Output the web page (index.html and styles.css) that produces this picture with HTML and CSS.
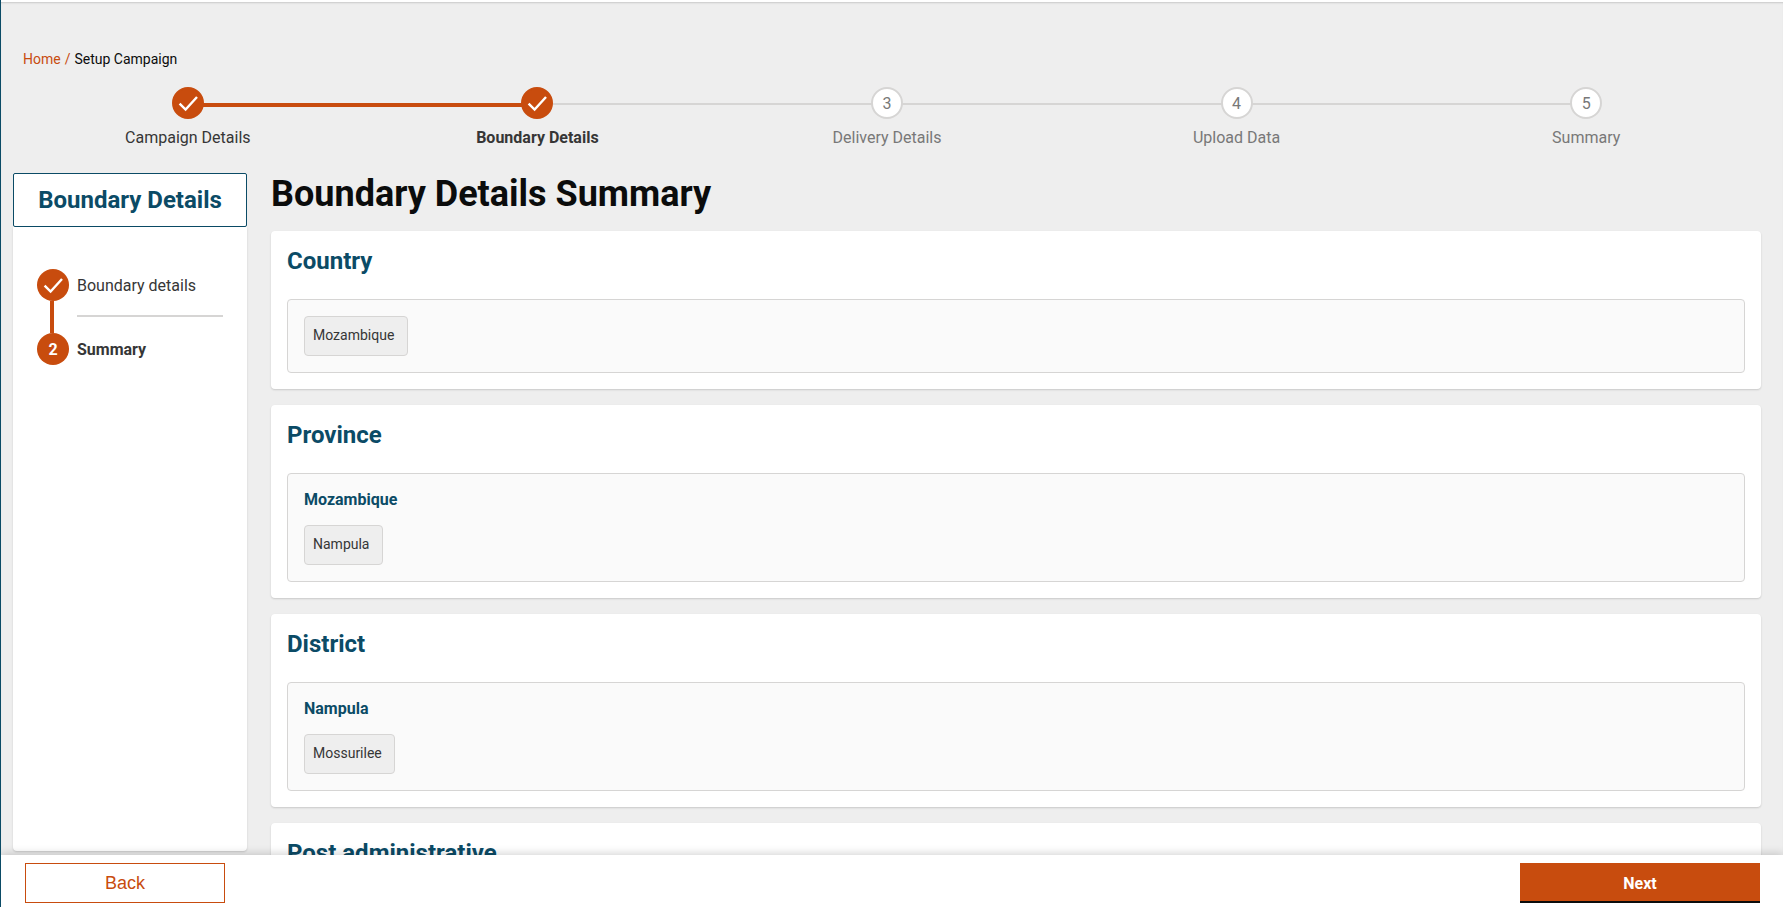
FILE: index.html
```html
<!DOCTYPE html>
<html lang="en">
<head>
<meta charset="utf-8">
<title>Setup Campaign</title>
<link rel="stylesheet" href="styles.css">
</head>
<body>
<div class="app">
  <div class="content">
    <nav class="crumbs"><a class="crumb-link">Home</a><span class="crumb-sep">/</span><span class="crumb-current">Setup Campaign</span></nav>
    <ol class="stepper">
      <li class="step done">
        <span class="step-track"><span class="bubble"><svg class="check" viewBox="0 0 20 20"><path d="M3 10.5 L8 15.5 L17.5 5"/></svg></span></span>
        <span class="step-label">Campaign Details</span>
      </li>
      <li class="step done current">
        <span class="step-track"><span class="bubble"><svg class="check" viewBox="0 0 20 20"><path d="M3 10.5 L8 15.5 L17.5 5"/></svg></span></span>
        <span class="step-label">Boundary Details</span>
      </li>
      <li class="step">
        <span class="step-track"><span class="bubble">3</span></span>
        <span class="step-label">Delivery Details</span>
      </li>
      <li class="step">
        <span class="step-track"><span class="bubble">4</span></span>
        <span class="step-label">Upload Data</span>
      </li>
      <li class="step">
        <span class="step-track"><span class="bubble">5</span></span>
        <span class="step-label">Summary</span>
      </li>
    </ol>
    <div class="columns">
      <aside class="sidebar">
        <div class="side-head">Boundary Details</div>
        <div class="side-body">
          <div class="sub-step">
            <span class="sub-bubble"><svg class="check" viewBox="0 0 20 20"><path d="M3 10.5 L8 15.5 L17.5 5"/></svg></span>
            <span class="sub-label">Boundary details</span>
          </div>
          <div class="sub-step last">
            <span class="sub-bubble">2</span>
            <span class="sub-label strong">Summary</span>
          </div>
        </div>
      </aside>
      <main class="main">
        <h1 class="page-title">Boundary Details Summary</h1>
        <section class="card">
          <h2 class="card-title">Country</h2>
          <div class="box"><span class="chip">Mozambique</span></div>
        </section>
        <section class="card">
          <h2 class="card-title">Province</h2>
          <div class="box"><h3 class="box-title">Mozambique</h3><span class="chip">Nampula</span></div>
        </section>
        <section class="card">
          <h2 class="card-title">District</h2>
          <div class="box"><h3 class="box-title">Nampula</h3><span class="chip">Mossurilee</span></div>
        </section>
        <section class="card">
          <h2 class="card-title">Post administrative</h2>
        </section>
      </main>
    </div>
  </div>
  <footer class="footer">
    <button class="btn-back">Back</button>
    <button class="btn-next">Next</button>
  </footer>
</div>
</body>
</html>
```
FILE: styles.css
```css
* { box-sizing: border-box; }
html, body { margin: 0; height: 100%; overflow: hidden; }
body { font-family: Roboto, "Noto Sans", sans-serif; color: #363636; background: #eee; }
.app {
  height: 907px;
  display: flex;
  flex-direction: column;
  border-left: 1px solid #0b4b66;
  overflow: hidden;
}
.content {
  flex: 1;
  min-height: 0;
  overflow: hidden;
  padding: 0 22px 0 12px;
  border-top: 2px solid #fff;
  box-shadow: inset 0 2px 2px -1px rgba(0,0,0,.16);
}
.crumbs {
  display: flex;
  align-items: center;
  gap: 4px;
  height: 20px;
  margin: 47px 0 0 10px;
  font-size: 14px;
}
.crumb-link, .crumb-sep { color: #c84c0e; }
.crumb-current { color: #0b0c0c; }
.stepper {
  list-style: none;
  display: flex;
  margin: 18px 0 0;
  padding: 0;
}
.step { flex: 1; display: flex; flex-direction: column; align-items: center; color: #787878; position: relative; }
.step-track { display: flex; width: 100%; justify-content: center; position: relative; }
.step-track::before {
  content: "";
  position: absolute;
  left: 50%;
  top: 16px;
  width: 100%;
  height: 2px;
  background: #d6d5d4;
}
.step.done .step-track::before { top: 16px; height: 4px; background: #c84c0e; }
.step.current .step-track::before { top: 16px; height: 2px; background: #d6d5d4; }
.step:last-child .step-track::before { display: none; }
.bubble {
  position: relative;
  width: 32px;
  height: 32px;
  border-radius: 50%;
  border: 2px solid #d6d5d4;
  background: #fff;
  display: flex;
  align-items: center;
  justify-content: center;
  font-size: 16px;
  color: #787878;
}
.step.done .bubble { background: #c84c0e; border-color: #c84c0e; }
.check { width: 24px; height: 24px; flex: none; fill: none; stroke: #fff; stroke-width: 2; }
.step-label { margin-top: 9px; font-size: 16px; line-height: 20px; }
.step.done .step-label { color: #363636; }
.step.current .step-label { font-weight: 700; }
.columns { display: flex; align-items: stretch; gap: 24px; margin-top: 25px; }
.sidebar { width: 234px; flex: none; height: 678px; display: flex; flex-direction: column; }
.side-head {
  height: 54px;
  background: #fff;
  border: 1px solid #0b4b66;
  border-radius: 2px;
  display: flex;
  align-items: center;
  justify-content: center;
  font-size: 24px;
  font-weight: 700;
  color: #0b4b66;
}
.side-body {
  flex: 1;
  background: #fff;
  border-radius: 0 0 4px 4px;
  box-shadow: 0 1px 2px rgba(0,0,0,.16);
  padding: 42px 24px 0;
}
.sub-step {
  display: flex;
  align-items: flex-start;
  gap: 8px;
  height: 64px;
  position: relative;
}
.sub-step::before {
  content: "";
  position: absolute;
  left: 13px;
  top: 32px;
  width: 4px;
  height: 32px;
  background: #c84c0e;
}
.sub-step.last::before { display: none; }
.sub-step::after {
  content: "";
  position: absolute;
  left: 40px;
  right: 0;
  top: 46px;
  height: 2px;
  background: #d6d5d4;
}
.sub-step.last::after { display: none; }
.sub-bubble {
  width: 32px;
  height: 32px;
  flex: none;
  border-radius: 50%;
  background: #c84c0e;
  color: #fff;
  font-weight: 700;
  font-size: 16px;
  display: flex;
  align-items: center;
  justify-content: center;
}
.sub-label { font-size: 16px; line-height: 32px; padding-top: 1px; }
.sub-label.strong { font-weight: 700; }
.main { flex: 1; min-width: 0; }
.page-title { margin: 0 0 16px; font-size: 36px; line-height: 42px; font-weight: 700; color: #0b0c0c; }
.card {
  background: #fff;
  border-radius: 4px;
  box-shadow: 0 1px 2px rgba(0,0,0,.16);
  padding: 16px 16px 16px;
  margin-bottom: 16px;
}
.card-title { margin: 0 0 24px; font-size: 24px; line-height: 28px; font-weight: 700; color: #0b4b66; }
.box {
  background: #fafafa;
  border: 1px solid #d6d5d4;
  border-radius: 4px;
  padding: 16px;
}
.box-title { margin: 0 0 15px; font-size: 16px; line-height: 20px; font-weight: 700; color: #0b4b66; }
.chip {
  display: flex;
  width: fit-content;
  height: 40px;
  align-items: center;
  padding: 0 12.5px 2px 8px;
  background: #eee;
  border: 1px solid #d6d5d4;
  border-radius: 4px;
  font-size: 14px;
}
.footer {
  flex: none;
  height: 52px;
  background: #fff;
  position: relative;
  box-shadow: 0 -2px 8px rgba(0,0,0,.16);
  display: flex;
  justify-content: space-between;
  align-items: flex-start;
  padding: 8px 23px 0 24px;
}
.btn-back {
  width: 200px;
  height: 40px;
  background: #fff;
  border: 1px solid #c84c0e;
  color: #c84c0e;
  font-family: "Liberation Sans", Arial, sans-serif;
  font-size: 18px;
  padding: 0;
}
.btn-next {
  width: 240px;
  height: 40px;
  background: #c84c0e;
  border: 0;
  border-bottom: 2px solid #0b0c0c;
  color: #fff;
  font-family: Roboto, sans-serif;
  font-size: 16px;
  font-weight: 700;
  padding: 2px 0 0;
}
```
